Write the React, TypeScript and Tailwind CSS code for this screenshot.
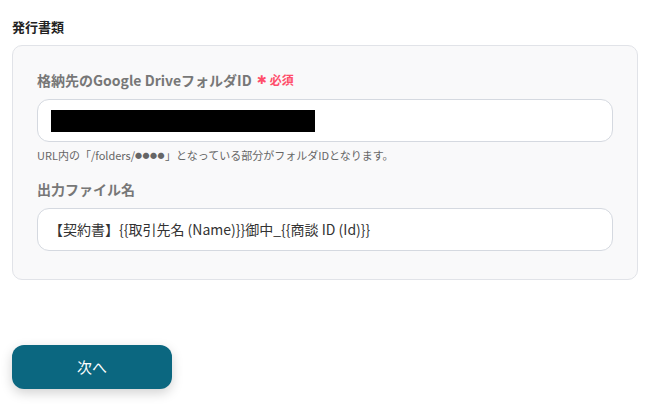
import React from "react";

export default function App() {
  return (
    <div
      className="w-[654px] h-[411px] bg-white px-3 pt-[17px]"
      style={{ fontFamily: '"Noto Sans CJK JP", "Noto Sans", sans-serif' }}
    >
      <div className="text-[13px] font-bold leading-[20px] text-[#222]">発行書類</div>
      <div className="mt-[8px] w-[626px] rounded-[10px] border border-[#e1e3e8] bg-[#f9f9fa] px-[24px] pt-[24px] pb-[28px]">
        <div className="flex h-[20px] items-center text-[14px] font-bold leading-[20px] text-[#777]">
          <span>格納先のGoogle DriveフォルダID</span>
          <span
            className="ml-[5px] text-[12px] leading-none text-[#ff4d6a]"
            style={{ fontFamily: '"DejaVu Sans", sans-serif' }}
          >
            ✱
          </span>
          <span className="ml-[3px] text-[12px] text-[#ff4d6a]">必須</span>
        </div>
        <div className="mt-[9px] flex h-[43px] items-center rounded-[12px] border border-[#d5d9e0] bg-white pl-[13px]">
          <div className="h-[22px] w-[264px] bg-black" />
        </div>
        <div className="mt-[6px] flex h-[14px] items-center overflow-hidden text-[11px] leading-[14px] text-[#666]">
          <span>URL内の「/folders/</span>
          <span className="text-[7px] leading-none tracking-[0.5px]">●●●●</span>
          <span>」となっている部分がフォルダIDとなります。</span>
        </div>
        <div className="mt-[17px] h-[20px] text-[14px] font-bold leading-[20px] text-[#777]">出力ファイル名</div>
        <div className="mt-[9px] flex h-[43px] items-center rounded-[12px] border border-[#d5d9e0] bg-white pl-[11px] text-[14px] text-[#333]">
          【契約書】{"{{"}取引先名 (Name){"}}"}御中_{"{{"}商談 ID (Id){"}}"}
        </div>
      </div>
      <button className="mt-[65px] flex h-[44px] w-[160px] items-center justify-center rounded-[12px] bg-[#0b6780] text-[15px] text-white shadow-[0_4px_12px_rgba(0,0,0,0.18)]">
        次へ
      </button>
    </div>
  );
}
